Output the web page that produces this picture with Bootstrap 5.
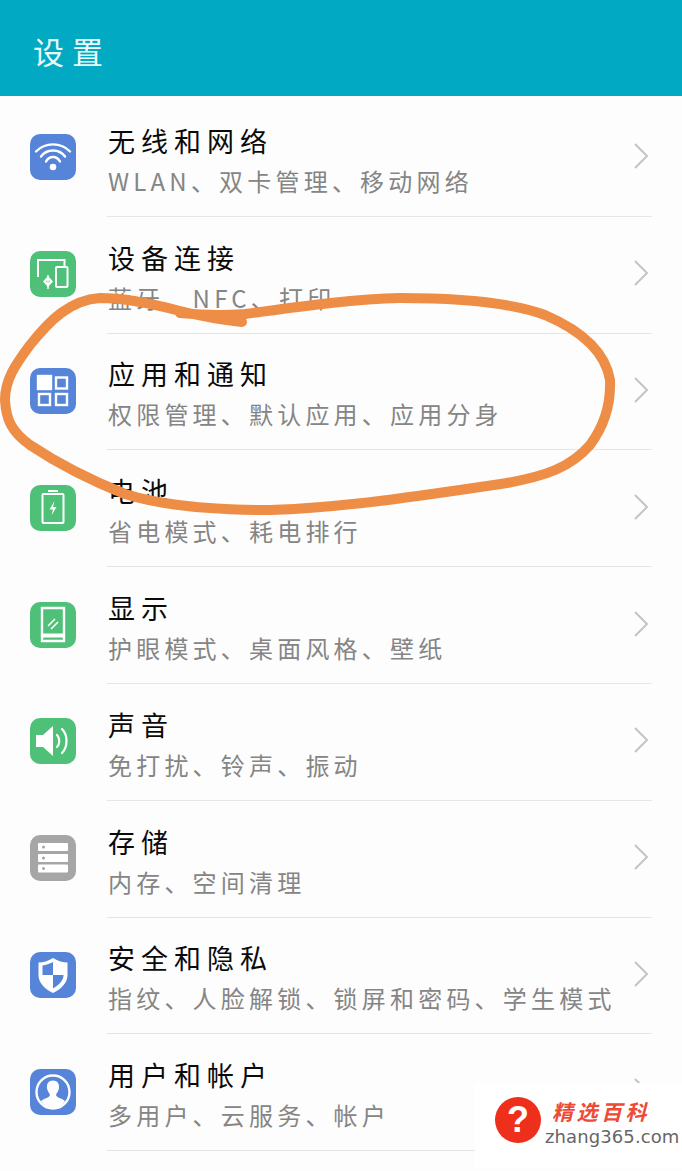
<!DOCTYPE html>
<html lang="zh-CN">
<head>
    <meta charset="UTF-8">
    <meta name="viewport" content="width=device-width, initial-scale=1.0">
    <title>设置</title>
    <link href="https://cdn.jsdelivr.net/npm/bootstrap@5.3.0/dist/css/bootstrap.min.css" rel="stylesheet">
    <style>
        body {
            background: #fdfdfd;
            font-family: "Noto Sans CJK SC", "Liberation Sans", sans-serif;
            height: 1171px;
            overflow: hidden;
        }
        .page-wrap { height: 1171px; }
        .top-bar {
            height: 96px;
            background: #01a9c2;
            color: #eafafa;
            font-size: 31px;
            line-height: 1;
            letter-spacing: 8px;
            padding-left: 33px;
            padding-top: 4px;
        }
        .settings-list { padding-top: 4px; }
        .settings-row {
            height: 116.8px;
            background: transparent;
            border: 0;
            padding: 0 30px 0 30px;
        }
        .icon-tile {
            width: 46px;
            height: 46px;
            border-radius: 10px;
            flex: none;
            margin-right: 31px;
            margin-top: -2px;
        }
        .icon-tile svg { display: block; }
        .tile-blue { background: #5584d8; }
        .tile-green { background: #4fc078; }
        .tile-grey { background: #a6a6a6; }
        .row-body {
            height: 100%;
            border-bottom: 1px solid #e6e6e6;
        }
        .row-text { padding-left: 1px; }
        .row-title {
            font-size: 27px;
            line-height: 48px;
            letter-spacing: 6px;
            color: #0a0a0a;
            height: 46px;
        }
        .row-sub {
            font-size: 24px;
            line-height: 36px;
            letter-spacing: 4.2px;
            color: #858585;
            white-space: nowrap;
        }
        .chevron { margin-right: 3px; margin-top: -3px; }
        .marker-overlay {
            position: absolute;
            left: 0;
            top: 0;
            pointer-events: none;
        }
        .site-stamp {
            position: absolute;
            left: 475px;
            top: 1083px;
            width: 207px;
            height: 85px;
            background: #fff;
        }
        .stamp-ball {
            width: 46px;
            height: 46px;
            border-radius: 50%;
            background: #ee2f1c;
            color: #fff;
            font-family: "Liberation Sans", sans-serif;
            font-weight: 700;
            font-size: 36px;
            line-height: 46px;
            text-align: center;
            margin: 14px 5px 0 20px;
        }
        .stamp-name {
            font-size: 21px;
            line-height: 26px;
            letter-spacing: 3.5px;
            font-weight: 700;
            font-style: italic;
            color: #ee4a35;
            margin: 15px 0 0 6px;
        }
        .stamp-url {
            font-family: "DejaVu Sans", sans-serif;
            font-size: 18px;
            line-height: 22px;
            letter-spacing: .1px;
            color: #666;
            margin: 2px 0 0 -1px;
        }
    </style>
</head>
<body>
<div class="page-wrap position-relative">
    <div class="top-bar d-flex align-items-center">设置</div>

    <div class="list-group list-group-flush settings-list rounded-0">
        <div class="list-group-item settings-row d-flex align-items-center">
            <div class="icon-tile tile-blue">
                <svg width="46" height="46" viewBox="0 0 46 46" fill="none" stroke="#fff" stroke-width="2.400" stroke-linecap="round">
                    <path d="M6 17.500C15 8 31 8 40 17.500"/>
                    <path d="M11 22.500C17 14.500 29 14.500 35 22.500"/>
                    <path d="M16 27.500C19.500 21.500 26.500 21.500 30 27.500"/>
                    <circle cx="23" cy="33" r="3.300" fill="#fff" stroke="none"/>
                </svg>
            </div>
            <div class="row-body flex-grow-1 d-flex justify-content-between align-items-center">
                <div class="row-text">
                    <div class="row-title">无线和网络</div>
                    <div class="row-sub">WLAN、双卡管理、移动网络</div>
                </div>
                <svg class="chevron" width="16" height="26" viewBox="0 0 16 26" fill="none" stroke="#c4c4c4" stroke-width="2"><path d="M2 1L14 13L2 25"/></svg>
            </div>
        </div>
        <div class="list-group-item settings-row d-flex align-items-center">
            <div class="icon-tile tile-green">
                <svg width="46" height="46" viewBox="0 0 46 46" fill="none" stroke="#fff" stroke-width="2">
                    <path d="M8 26V9H34.500V15"/>
                    <rect x="26" y="16" width="11.500" height="20" rx="1"/>
                    <path d="M18 25L23 30.500L18 36L13 30.500Z" fill="#fff" stroke="none"/>
                    <circle cx="18" cy="30.500" r="1.600" fill="#4fc078" stroke="none"/>
                    <path d="M18 24V38" stroke-width="1.500"/>
                </svg>
            </div>
            <div class="row-body flex-grow-1 d-flex justify-content-between align-items-center">
                <div class="row-text">
                    <div class="row-title">设备连接</div>
                    <div class="row-sub">蓝牙、NFC、打印</div>
                </div>
                <svg class="chevron" width="16" height="26" viewBox="0 0 16 26" fill="none" stroke="#c4c4c4" stroke-width="2"><path d="M2 1L14 13L2 25"/></svg>
            </div>
        </div>
        <div class="list-group-item settings-row d-flex align-items-center">
            <div class="icon-tile tile-blue">
                <svg width="46" height="46" viewBox="0 0 46 46" fill="none" stroke="#fff" stroke-width="2.400">
                    <rect x="8" y="8" width="13" height="13" fill="#fff"/>
                    <rect x="26" y="9.500" width="11" height="11"/>
                    <rect x="9" y="26" width="11" height="11"/>
                    <rect x="26" y="26" width="11" height="11"/>
                </svg>
            </div>
            <div class="row-body flex-grow-1 d-flex justify-content-between align-items-center">
                <div class="row-text">
                    <div class="row-title">应用和通知</div>
                    <div class="row-sub">权限管理、默认应用、应用分身</div>
                </div>
                <svg class="chevron" width="16" height="26" viewBox="0 0 16 26" fill="none" stroke="#c4c4c4" stroke-width="2"><path d="M2 1L14 13L2 25"/></svg>
            </div>
        </div>
        <div class="list-group-item settings-row d-flex align-items-center">
            <div class="icon-tile tile-green">
                <svg width="46" height="46" viewBox="0 0 46 46" fill="none" stroke="#fff" stroke-width="2">
                    <path d="M18 6H28" stroke-width="2"/>
                    <rect x="12.500" y="9" width="21" height="29" rx="1"/>
                    <path d="M24.500 16L19.500 24.500H23L21.500 30.500L26.500 22H23Z" fill="#fff" stroke="none"/>
                </svg>
            </div>
            <div class="row-body flex-grow-1 d-flex justify-content-between align-items-center">
                <div class="row-text">
                    <div class="row-title">电池</div>
                    <div class="row-sub">省电模式、耗电排行</div>
                </div>
                <svg class="chevron" width="16" height="26" viewBox="0 0 16 26" fill="none" stroke="#c4c4c4" stroke-width="2"><path d="M2 1L14 13L2 25"/></svg>
            </div>
        </div>
        <div class="list-group-item settings-row d-flex align-items-center">
            <div class="icon-tile tile-green">
                <svg width="46" height="46" viewBox="0 0 46 46" fill="none" stroke="#fff" stroke-width="2.400">
                    <path d="M12 6H34V39H12Z"/>
                    <path d="M12.500 33.500H33.500" stroke-width="4"/>
                    <path d="M18 24L25 17M21 27L28 20" stroke-width="1.600"/>
                </svg>
            </div>
            <div class="row-body flex-grow-1 d-flex justify-content-between align-items-center">
                <div class="row-text">
                    <div class="row-title">显示</div>
                    <div class="row-sub">护眼模式、桌面风格、壁纸</div>
                </div>
                <svg class="chevron" width="16" height="26" viewBox="0 0 16 26" fill="none" stroke="#c4c4c4" stroke-width="2"><path d="M2 1L14 13L2 25"/></svg>
            </div>
        </div>
        <div class="list-group-item settings-row d-flex align-items-center">
            <div class="icon-tile tile-green">
                <svg width="46" height="46" viewBox="0 0 46 46" fill="none" stroke="#fff" stroke-width="2.200" stroke-linecap="round">
                    <path d="M6 17H13L23 8V38L13 29H6Z" fill="#fff" stroke="none"/>
                    <path d="M27 17C30 20 30 26 27 29"/>
                    <path d="M32 11C38 17 38 29 32 35"/>
                </svg>
            </div>
            <div class="row-body flex-grow-1 d-flex justify-content-between align-items-center">
                <div class="row-text">
                    <div class="row-title">声音</div>
                    <div class="row-sub">免打扰、铃声、振动</div>
                </div>
                <svg class="chevron" width="16" height="26" viewBox="0 0 16 26" fill="none" stroke="#c4c4c4" stroke-width="2"><path d="M2 1L14 13L2 25"/></svg>
            </div>
        </div>
        <div class="list-group-item settings-row d-flex align-items-center">
            <div class="icon-tile tile-grey">
                <svg width="46" height="46" viewBox="0 0 46 46" fill="#fff">
                    <rect x="8" y="8" width="30" height="8" rx="1"/>
                    <rect x="8" y="19" width="30" height="8" rx="1"/>
                    <rect x="8" y="29.500" width="30" height="8" rx="1"/>
                    <circle cx="13.500" cy="12" r="1.500" fill="#a6a6a6"/>
                    <circle cx="13.500" cy="23" r="1.500" fill="#a6a6a6"/>
                    <circle cx="13.500" cy="33.500" r="1.500" fill="#a6a6a6"/>
                </svg>
            </div>
            <div class="row-body flex-grow-1 d-flex justify-content-between align-items-center">
                <div class="row-text">
                    <div class="row-title">存储</div>
                    <div class="row-sub">内存、空间清理</div>
                </div>
                <svg class="chevron" width="16" height="26" viewBox="0 0 16 26" fill="none" stroke="#c4c4c4" stroke-width="2"><path d="M2 1L14 13L2 25"/></svg>
            </div>
        </div>
        <div class="list-group-item settings-row d-flex align-items-center">
            <div class="icon-tile tile-blue">
                <svg width="46" height="46" viewBox="0 0 46 46">
                    <path d="M23 6C18 9 13 10.500 8.500 10.500V23C8.500 31 15 37 23 41C31 37 37.500 31 37.500 23V10.500C33 10.500 28 9 23 6Z" fill="#fff"/>
                    <path d="M23 10C19.500 12 16 13 12.500 13.500V23H23ZM23 23V36.500C28 33.500 33.500 29 33.500 23Z" fill="#5584d8"/>
                </svg>
            </div>
            <div class="row-body flex-grow-1 d-flex justify-content-between align-items-center">
                <div class="row-text">
                    <div class="row-title">安全和隐私</div>
                    <div class="row-sub">指纹、人脸解锁、锁屏和密码、学生模式</div>
                </div>
                <svg class="chevron" width="16" height="26" viewBox="0 0 16 26" fill="none" stroke="#c4c4c4" stroke-width="2"><path d="M2 1L14 13L2 25"/></svg>
            </div>
        </div>
        <div class="list-group-item settings-row d-flex align-items-center">
            <div class="icon-tile tile-blue">
                <svg width="46" height="46" viewBox="0 0 46 46">
                    <circle cx="23" cy="23" r="16.500" fill="none" stroke="#fff" stroke-width="2.400"/>
                    <path d="M23 11.500C27.500 11.500 29.500 15 29 19C28.700 22 27 24 26 25.500C26 27.500 28 28.500 32 30L35 32C32 36.500 28 39 23 39C18 39 14 36.500 11 32L14 30C18 28.500 20 27.500 20 25.500C19 24 17.300 22 17 19C16.500 15 18.500 11.500 23 11.500Z" fill="#fff"/>
                </svg>
            </div>
            <div class="row-body flex-grow-1 d-flex justify-content-between align-items-center">
                <div class="row-text">
                    <div class="row-title">用户和帐户</div>
                    <div class="row-sub">多用户、云服务、帐户</div>
                </div>
                <svg class="chevron" width="16" height="26" viewBox="0 0 16 26" fill="none" stroke="#c4c4c4" stroke-width="2"><path d="M2 1L14 13L2 25"/></svg>
            </div>
        </div>
    </div>

    <!-- hand drawn marker round the third row -->
    <svg class="marker-overlay" width="682" height="1171" viewBox="0 0 682 1171" fill="none" stroke="#ee8d45" stroke-width="10" stroke-linecap="round" stroke-linejoin="round">
        <path d="M242 322C222 320 200 316 180 311C150 303 125 298 100 298C70 300 50 320 30 345C15 365 5 380 5 400C6 420 12 432 30 445C60 465 90 480 125 494C160 505 210 510 270 510C340 508 420 496 507 483C545 476 570 468 590 445C605 425 611 405 610 380C605 350 580 330 545 315C510 302 460 298 400 298C350 299 290 308 245 314C220 316 200 315 180 313"/>
    </svg>

    <div class="site-stamp d-flex">
        <div class="stamp-ball flex-shrink-0">?</div>
        <div>
            <div class="stamp-name">精选百科</div>
            <div class="stamp-url">zhang365.com</div>
        </div>
    </div>
</div>
<script src="https://cdn.jsdelivr.net/npm/bootstrap@5.3.0/dist/js/bootstrap.bundle.min.js"></script>
</body>
</html>
